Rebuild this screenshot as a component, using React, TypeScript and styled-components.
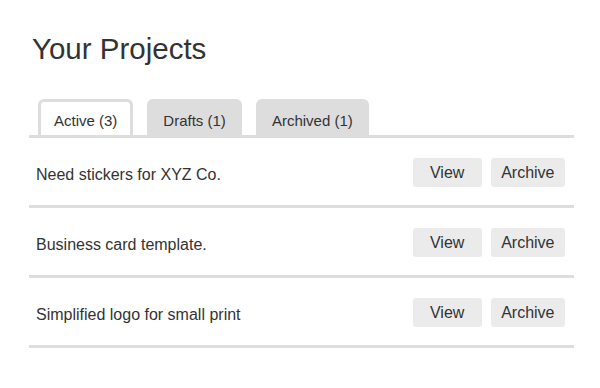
import React from "react";
import styled, { createGlobalStyle } from "styled-components";

const GlobalStyle = createGlobalStyle`
  html, body {
    margin: 0;
    padding: 0;
    background: #ffffff;
  }
  body {
    font-family: "Liberation Sans", Arial, Helvetica, sans-serif;
    color: #333333;
  }
`;

const Page = styled.div`
  width: 545px;
  margin-left: 29px;
`;

const Title = styled.h1`
  margin: 32px 0 0 3px;
  font-size: 29.5px;
  font-weight: normal;
  line-height: normal;
  color: #333333;
`;

const TabList = styled.div`
  display: flex;
  gap: 14px;
  margin-top: 33px;
  padding-left: 9px;
  border-bottom: 3px solid #dddddd;
`;

const Tab = styled.button<{ $active?: boolean }>`
  box-sizing: border-box;
  height: 36px;
  display: flex;
  align-items: center;
  padding: 4px 13px 0;
  border: 3px solid #dddddd;
  border-bottom: 0;
  border-radius: 6px 6px 0 0;
  background: ${(p) => (p.$active ? "#ffffff" : "#dddddd")};
  font-family: inherit;
  font-size: 15px;
  color: #333333;
  cursor: pointer;
`;

const List = styled.div`
  display: flex;
  flex-direction: column;
`;

const Row = styled.div`
  box-sizing: border-box;
  height: 70px;
  display: flex;
  align-items: center;
  justify-content: space-between;
  padding: 2px 9px 0 7px;
  border-bottom: 3px solid #dddddd;
`;

const Label = styled.span`
  font-size: 16px;
  color: #333333;
  padding-top: 5px;
`;

const Actions = styled.div`
  display: flex;
  gap: 9px;
`;

const ActionButton = styled.button`
  box-sizing: border-box;
  height: 29px;
  min-width: 69px;
  padding: 0 10.5px;
  border: none;
  border-radius: 3px;
  background: #ebebeb;
  font-family: inherit;
  font-size: 16px;
  color: #333333;
  cursor: pointer;
`;

const tabs = [
  { label: "Active (3)", active: true },
  { label: "Drafts (1)", active: false },
  { label: "Archived (1)", active: false },
];

const projects = [
  "Need stickers for XYZ Co.",
  "Business card template.",
  "Simplified logo for small print",
];

export default function App() {
  return (
    <>
      <GlobalStyle />
      <Page>
        <Title>Your Projects</Title>
        <TabList>
          {tabs.map((t) => (
            <Tab key={t.label} $active={t.active}>
              {t.label}
            </Tab>
          ))}
        </TabList>
        <List>
          {projects.map((p) => (
            <Row key={p}>
              <Label>{p}</Label>
              <Actions>
                <ActionButton>View</ActionButton>
                <ActionButton>Archive</ActionButton>
              </Actions>
            </Row>
          ))}
        </List>
      </Page>
    </>
  );
}
